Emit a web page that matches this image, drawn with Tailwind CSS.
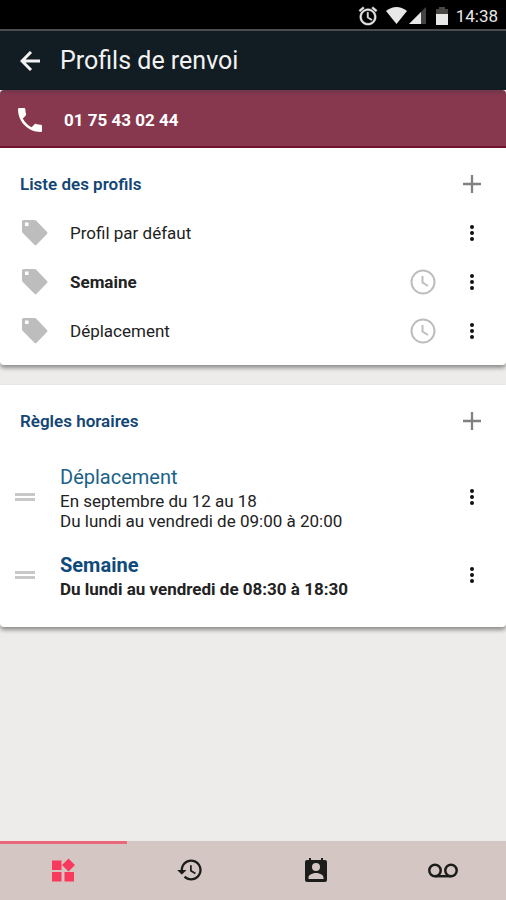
<!DOCTYPE html>
<html lang="fr">
<head>
  <meta charset="UTF-8" />
  <meta name="viewport" content="width=device-width, initial-scale=1" />
  <title>Profils de renvoi</title>
  <script src="https://cdn.jsdelivr.net/npm/@tailwindcss/browser@4"></script>
</head>
<body class="bg-[#edecea] font-['Roboto',sans-serif] text-[#222222]">
  <!-- icônes partagées -->
  <svg class="hidden">
    <symbol id="tag" viewBox="0 0 26 26"><path fill-rule="evenodd" d="M1.500 0H12.500Q13.500 0 14.300 .8L25 12Q26 13 25 14L14.300 25Q13.500 25.800 12.700 25L.8 13Q0 12.200 0 11.300V1.500Q0 0 1.500 0ZM3 2.500V6H6.500V2.500Z"/></symbol>
    <symbol id="plus" viewBox="0 0 18 18"><path d="M9 0V18M0 9H18" stroke="currentColor" stroke-width="2.300"/></symbol>
    <symbol id="dots" viewBox="0 0 4 16"><circle cx="2" cy="2" r="2"/><circle cx="2" cy="8" r="2"/><circle cx="2" cy="14" r="2"/></symbol>
    <symbol id="clock" viewBox="0 0 26 26"><g fill="none" stroke="currentColor" stroke-width="2"><circle cx="13" cy="13" r="11.500"/><path d="M12.500 7V13.500L18 17"/></g></symbol>
    <symbol id="grip" viewBox="0 0 20 8"><path d="M0 0H20V3H0ZM0 5H20V8H0Z"/></symbol>
  </svg>

  <div class="min-h-screen flex flex-col">
    <!-- barre d'état -->
    <div class="h-[31px] pt-0.5 bg-black border-b-2 border-[#4b4b4f] flex items-center justify-end pr-2 text-[#e8e8e8]">
      <svg class="w-5 h-5 mr-2" viewBox="1 1 22 22" fill="currentColor" stroke="currentColor" stroke-width=".5"><path d="M22 5.720l-4.600-3.860-1.290 1.530 4.600 3.860L22 5.720zM7.880 3.390L6.600 1.860 2 5.710l1.290 1.530 4.590-3.850zM12.500 8H11v6l4.750 2.850.75-1.230-4-2.370V8zM12 4c-4.970 0-9 4.030-9 9s4.020 9 9 9c4.970 0 9-4.030 9-9s-4.030-9-9-9zm0 16c-3.870 0-7-3.130-7-7s3.130-7 7-7 7 3.130 7 7-3.130 7-7 7z"/></svg>
      <svg class="w-[21px] h-[17px] mr-0.5" viewBox="0 0 21 17" fill="currentColor"><path d="M0 4Q10.500-4 21 4L10.500 17Z"/></svg>
      <svg class="w-[17px] h-[17px] mr-2.5" viewBox="0 0 17 17"><path d="M17 0V17H0Z" fill="#444444"/><path d="M12 5V17H0Z" fill="currentColor"/></svg>
      <svg class="w-3 h-[18px] mr-2" viewBox="0 0 12 18"><path d="M3 0H9V2H12V7H0V2H3Z" fill="#4a4645"/><path d="M0 7H12V18H0Z" fill="currentColor"/></svg>
      <span class="text-[17px] leading-6">14:38</span>
    </div>

    <header class="h-[59px] bg-[#111c23] text-[#f2f2f2] flex items-center pl-5">
      <button aria-label="Retour" class="mr-5">
        <svg class="w-5 h-5" viewBox="0 0 20 20" fill="none" stroke="currentColor" stroke-width="3"><path d="M20 10H2M11 1L2 10L11 19"/></svg>
      </button>
      <h1 class="text-[25px] leading-8">Profils de renvoi</h1>
    </header>

    <a href="tel:0175430244" class="h-[58px] pt-1 bg-linear-to-b from-[#70354a] to-[#87384e] to-10% border-b-2 border-[#74132f] rounded-t-sm text-white flex items-center pl-[18px]">
      <svg class="w-6 h-6 mr-[22px]" viewBox="3 3 18 18" fill="currentColor"><path d="M6.620 10.790c1.440 2.830 3.760 5.140 6.590 6.590l2.200-2.200c.27-.27.67-.36 1.020-.24 1.120.37 2.330.57 3.570.57.55 0 1 .45 1 1V20c0 .55-.45 1-1 1-9.390 0-17-7.610-17-17 0-.55.45-1 1-1h3.500c.55 0 1 .45 1 1 0 1.250.2 2.450.57 3.570.11.35.03.74-.25 1.020l-2.200 2.200z"/></svg>
      <span class="text-[17px] leading-6 font-bold">01 75 43 02 44</span>
    </a>

    <main class="grow">
      <section class="bg-white rounded-b-sm shadow-[0_3px_4px_rgba(0,0,0,0.4)] pt-3 pb-[10px] mb-5">
        <div class="h-12 flex items-center justify-between pl-5 pr-[25px]">
          <h2 class="text-[17px] leading-6 font-semibold text-[#134674]">Liste des profils</h2>
          <button aria-label="Ajouter un profil" class="text-[#808080]"><svg class="w-[18px] h-[18px]"><use href="#plus"/></svg></button>
        </div>
        <ul>
          <li class="h-[49px] flex items-center pl-[22px] pr-8">
            <svg class="w-[26px] h-[26px] mr-[22px] fill-[#bdbdbd]"><use href="#tag"/></svg>
            <span class="grow text-[17px] leading-6">Profil par défaut</span>
            <button aria-label="Options"><svg class="w-1 h-4 fill-[#111111]"><use href="#dots"/></svg></button>
          </li>
          <li class="h-[49px] flex items-center pl-[22px] pr-8">
            <svg class="w-[26px] h-[26px] mr-[22px] fill-[#bdbdbd]"><use href="#tag"/></svg>
            <span class="grow text-[17px] leading-6 font-bold">Semaine</span>
            <svg class="w-[26px] h-[26px] mr-[34px] text-[#bdbdbd]"><use href="#clock"/></svg>
            <button aria-label="Options"><svg class="w-1 h-4 fill-[#111111]"><use href="#dots"/></svg></button>
          </li>
          <li class="h-[49px] flex items-center pl-[22px] pr-8">
            <svg class="w-[26px] h-[26px] mr-[22px] fill-[#bdbdbd]"><use href="#tag"/></svg>
            <span class="grow text-[17px] leading-6">Déplacement</span>
            <svg class="w-[26px] h-[26px] mr-[34px] text-[#bdbdbd]"><use href="#clock"/></svg>
            <button aria-label="Options"><svg class="w-1 h-4 fill-[#111111]"><use href="#dots"/></svg></button>
          </li>
        </ul>
      </section>

      <section class="bg-white rounded-b-sm shadow-[0_3px_4px_rgba(0,0,0,0.4)] pt-3 pb-7">
        <div class="h-12 flex items-center justify-between pl-5 pr-[25px]">
          <h2 class="text-[17px] leading-6 font-semibold text-[#134674]">Règles horaires</h2>
          <button aria-label="Ajouter une règle" class="text-[#808080]"><svg class="w-[18px] h-[18px]"><use href="#plus"/></svg></button>
        </div>
        <ul class="pt-[18px] flex flex-col gap-5">
          <li class="flex items-center pl-[15px] pr-8">
            <svg class="w-5 h-2 mr-[25px] fill-[#c8c8c8]"><use href="#grip"/></svg>
            <div class="grow">
              <h3 class="text-xl leading-7 text-[#1b6288]">Déplacement</h3>
              <p class="text-[17px] leading-5">En septembre du 12 au 18</p>
              <p class="text-[17px] leading-5">Du lundi au vendredi de 09:00 à 20:00</p>
            </div>
            <button aria-label="Options"><svg class="w-1 h-4 fill-[#111111]"><use href="#dots"/></svg></button>
          </li>
          <li class="flex items-center pl-[15px] pr-8">
            <svg class="w-5 h-2 mr-[25px] fill-[#c8c8c8]"><use href="#grip"/></svg>
            <div class="grow">
              <h3 class="text-xl leading-7 font-bold text-[#104a7a]">Semaine</h3>
              <p class="text-[17px] leading-5 font-bold">Du lundi au vendredi de 08:30 à 18:30</p>
            </div>
            <button aria-label="Options"><svg class="w-1 h-4 fill-[#111111]"><use href="#dots"/></svg></button>
          </li>
        </ul>
      </section>
    </main>

    <nav class="h-[59px] bg-[#d4c7c3] grid grid-cols-4 text-[#1c1c1a]">
      <a href="#" aria-label="Accueil" class="border-t-3 border-[#e8687a] pb-1 text-[#f83a5c] flex items-center justify-center">
        <svg class="w-6 h-6" viewBox="0 0 24 24" fill="currentColor"><path d="M1 2.500H10.500V12H1ZM1 14H10.500V23.500H1ZM13.500 14H23V23.500H13.500ZM17.500 .5L24 7L17.500 13.500L11 7Z"/></svg>
      </a>
      <a href="#" aria-label="Historique" class="border-t-3 border-transparent pb-1 flex items-center justify-center">
        <svg class="w-7 h-7" viewBox="0 0 24 24" fill="currentColor"><path d="M13 3c-4.970 0-9 4.030-9 9H1l3.890 3.890.07.14L9 12H6c0-3.870 3.130-7 7-7s7 3.130 7 7-3.130 7-7 7c-1.930 0-3.680-.79-4.940-2.060l-1.420 1.420C8.270 19.990 10.510 21 13 21c4.970 0 9-4.030 9-9s-4.030-9-9-9zm-1 5v5l4.280 2.540.72-1.210-3.500-2.080V8H12z"/></svg>
      </a>
      <a href="#" aria-label="Contacts" class="border-t-3 border-transparent pb-1 flex items-center justify-center">
        <svg class="w-[22px] h-6" viewBox="0 0 22 24" fill="currentColor"><path fill-rule="evenodd" d="M4 0H6V2H16V0H18V2H20Q22 2 22 4V22Q22 24 20 24H2Q0 24 0 22V4Q0 2 2 2H4ZM11 5A4 4 0 1 0 11 13A4 4 0 1 0 11 5ZM3.500 21H18.500V19.500C18.500 16.500 14 15 11 15S3.500 16.500 3.500 19.500Z"/></svg>
      </a>
      <a href="#" aria-label="Messagerie vocale" class="border-t-3 border-transparent pb-1 flex items-center justify-center">
        <svg class="w-[30px] h-[15px]" viewBox="0 0 30 15" fill="none" stroke="currentColor" stroke-width="2.500"><circle cx="7" cy="7.500" r="5.700"/><circle cx="23" cy="7.500" r="5.700"/><path d="M7 13.200H23"/></svg>
      </a>
    </nav>
  </div>
</body>
</html>
